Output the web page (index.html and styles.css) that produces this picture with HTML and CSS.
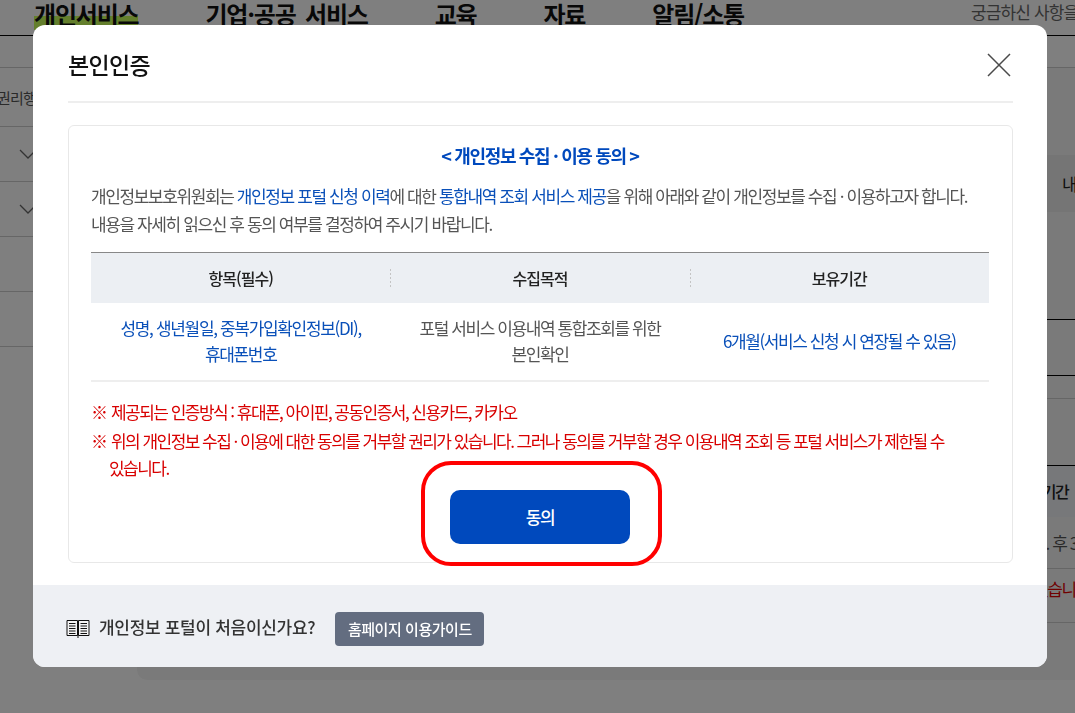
FILE: index.html
```html
<!DOCTYPE html>
<html lang="ko">
<head>
<meta charset="utf-8">
<title>본인인증</title>
<link rel="stylesheet" href="styles.css">
</head>
<body>
<div class="page">
  <header class="gnb">
    <nav class="gnb-menu">
      <a class="gnb-item gnb-active">개인서비스</a>
      <a class="gnb-item">기업·공공 서비스</a>
      <a class="gnb-item">교육</a>
      <a class="gnb-item">자료</a>
      <a class="gnb-item">알림/소통</a>
    </nav>
    <span class="gnb-search">궁금하신 사항을</span>
  </header>
  <div class="under">
    <aside class="side">
      <div class="side-row side-first"><span class="side-label">권리행사</span></div>
      <div class="side-row"><svg class="chev" viewBox="0 0 18 10"><path d="M1 1l8 8 8-8"/></svg></div>
      <div class="side-row"><svg class="chev" viewBox="0 0 18 10"><path d="M1 1l8 8 8-8"/></svg></div>
      <div class="side-row"></div>
      <div class="side-row"></div>
    </aside>
    <main class="main">
      <div class="main-box">내</div>
      <div class="mt-a"></div>
      <div class="mt-b"></div>
      <div class="mt-c"></div>
      <div class="mt-d"></div>
      <div class="mt-head">보유기간</div>
      <div class="mt-row">처리. 후 3일</div>
      <div class="mt-row mt-red">있습니다</div>
    </main>
  </div>
</div>

<div class="dim"></div>

<section class="modal">
  <div class="modal-body">
    <div class="modal-head">
      <h1 class="modal-title">본인인증</h1>
      <svg class="close" viewBox="0 0 24 24"><path d="M1 1l22 22M23 1L1 23"/></svg>
    </div>
    <div class="card">
      <h2 class="card-title">&lt; 개인정보 수집 · 이용 동의 &gt;</h2>
      <p class="lead">개인정보보호위원회는 <span class="blue">개인정보 포털 신청 이력</span>에 대한 <span class="blue">통합내역 조회 서비스 제공</span>을 위해 아래와 같이 개인정보를 수집 · 이용하고자 합니다.<br>내용을 자세히 읽으신 후 동의 여부를 결정하여 주시기 바랍니다.</p>
      <table class="terms">
        <thead>
          <tr><th>항목(필수)</th><th>수집목적</th><th>보유기간</th></tr>
        </thead>
        <tbody>
          <tr>
            <td class="blue td-wide">성명, 생년월일, 중복가입확인정보(DI),<br>휴대폰번호</td>
            <td>포털 서비스 이용내역 통합조회를 위한<br>본인확인</td>
            <td class="blue">6개월(서비스 신청 시 연장될 수 있음)</td>
          </tr>
        </tbody>
      </table>
      <ul class="notes">
        <li>제공되는 인증방식 : 휴대폰, 아이핀, 공동인증서, 신용카드, 카카오</li>
        <li>위의 개인정보 수집 · 이용에 대한 동의를 거부할 권리가 있습니다. 그러나 동의를 거부할 경우 이용내역 조회 등 포털 서비스가 제한될 수 있습니다.</li>
      </ul>
      <div class="agree-wrap">
        <button class="agree" type="button">동의</button>
        <div class="agree-ring"></div>
      </div>
    </div>
  </div>
  <footer class="modal-foot">
    <svg class="book" viewBox="0 0 24 19"><path class="book-fill" d="M1 1.500h10.500v15H1zM12.500 1.500H23v15H12.500z"/><path d="M1 1.500h10.500v15H1zM12.500 1.500H23v15H12.500zM12 1.500V19M3 4.500h6.500M3 7h6.500M3 9.500h6.500M3 12h6.500M3 14.500h6.500M14.500 4.500H21M14.500 7H21M14.500 9.500H21M14.500 12H21M14.500 14.500H21"/></svg>
    <span class="foot-text">개인정보 포털이 처음이신가요?</span>
    <a class="guide">홈페이지 이용가이드</a>
  </footer>
</section>
</body>
</html>
```

FILE: styles.css
```css
* { box-sizing: border-box; }
html, body { margin: 0; height: 100%; overflow: hidden; }
body {
  font-family: "Noto Sans CJK KR", "Noto Sans", sans-serif;
  color: #222;
  background: #fff;
  letter-spacing: -0.087em;
}

/* page behind the dialog */
.page { height: 713px; overflow: hidden; display: flex; flex-direction: column; }
.gnb { height: 36px; flex: none; display: flex; border-bottom: 1px solid #000; padding-left: 34px; overflow: hidden; }
.gnb-menu { display: flex; gap: 67px; flex: none; }
.gnb-item { font-size: 24px; font-weight: 700; line-height: 28px; color: #111; white-space: nowrap; letter-spacing: -0.05em; word-spacing: 4px; }
.gnb-active { background: linear-gradient(transparent 16px, #c8ff5a 16px); height: 30px; }
.gnb-search { margin-left: 227px; font-size: 17px; line-height: 24px; color: #666; white-space: nowrap; flex: none; letter-spacing: -0.05em; }
.under { flex: 1; display: flex; align-items: flex-start; }
.side { width: 137px; flex: none; padding-top: 31px; }
.side-row { height: 55px; border-bottom: 1px solid #ccc; display: flex; align-items: center; padding-left: 19px; }
.side-first { height: 60px; padding-left: 0; border-top: 1px solid #ccc; }
.side-label { font-size: 15px; color: #555; white-space: nowrap; margin-left: -3px; letter-spacing: -0.05em; }
.chev { width: 18px; height: 10px; fill: none; stroke: #666; stroke-width: 1.300; }
.main { flex: 1; min-width: 0; height: 613px; margin-top: 31px; background: #f5f5f5; border-radius: 0 0 0 10px; border-top: 1px solid #ccc; padding-top: 87px; }
.main-box { height: 57px; background: #eaeaea; font-size: 17px; line-height: 57px; padding-left: 925px; white-space: nowrap; }
.mt-a { height: 108px; border-bottom: 1px solid #000; }
.mt-b { height: 56px; border-bottom: 1px solid #000; }
.mt-c { height: 23px; border-bottom: 1px solid #ccc; }
.mt-d { height: 67px; border-bottom: 1px solid #000; }
.mt-head { height: 51px; background: #eef1f5; font-size: 16px; font-weight: 500; line-height: 51px; padding-left: 878px; white-space: nowrap; }
.mt-row { height: 52px; border-bottom: 1px solid #ccc; font-size: 17px; line-height: 52px; padding-left: 880px; white-space: nowrap; color: #555; }
.mt-red { height: 54px; color: #e00000; padding-left: 896px; line-height: 40px; }
.dim { position: fixed; inset: 0; background: rgba(0, 0, 0, 0.5); }

/* dialog */
.modal {
  position: fixed; left: 33px; top: 25px; width: 1014px; height: 642px;
  background: #fff; border-radius: 12px; overflow: hidden;
  display: flex; flex-direction: column;
}
.modal-body { flex: 1; padding: 0 34px 0 35px; display: flex; flex-direction: column; }
.modal-head { height: 78px; border-bottom: 2px solid #eeeeee; display: flex; align-items: center; justify-content: space-between; flex: none; padding-top: 2px; }
.modal-title { margin: 0; font-size: 23px; font-weight: 500; color: #111; line-height: 30px; letter-spacing: -0.03em; }
.close { width: 24px; height: 24px; fill: none; stroke: #4a4a4a; stroke-width: 1.500; margin: 2px 2px 0 0; }
.card { margin-top: 22px; height: 438px; border: 1px solid #e8e8e8; border-radius: 6px; padding: 0 23px 0 22px; display: flex; flex-direction: column; }
.card-title { margin: 17px 0 0; font-size: 18px; line-height: 24px; font-weight: 700; color: #0049bd; text-align: center; letter-spacing: -0.075em; }
.lead { margin: 15px 0 0; font-size: 17px; line-height: 28px; color: #555; }
.blue { color: #0a50b9; }
.terms { margin-top: 14px; width: 100%; border-collapse: collapse; table-layout: fixed; font-size: 17px; line-height: 26px; letter-spacing: -0.083em; }
.terms thead tr { background: #eceff3; border-top: 1px solid #888; }
.terms th { height: 50px; font-size: 16px; font-weight: 500; color: #222; padding: 0; letter-spacing: -0.06em; background-image: repeating-linear-gradient(#c4c4c4 0 2px, transparent 2px 4px); background-size: 1px 18px; background-repeat: no-repeat; background-position: left center; }
.terms th:first-child { background-image: none; }
.terms td { height: 78px; padding: 0; text-align: center; vertical-align: middle; }
.terms td.td-wide { letter-spacing: -0.078em; }
.terms td:not(.blue) { color: #555; }
.terms tbody tr { border-bottom: 2px solid #eeeeee; }
.notes { list-style: none; margin: 16px 0 0; padding: 0; font-size: 17px; line-height: 27px; color: #d80000; letter-spacing: -0.09em; }
.notes li { padding-left: 18px; text-indent: -18px; margin-bottom: 2px; padding-right: 30px; }
.notes li::before { content: "※"; display: inline-block; width: 20px; text-indent: 0; }
.agree-wrap { display: flex; justify-content: center; margin-top: 7px; position: relative; }
.agree { width: 180px; height: 54px; border: 0; border-radius: 10px; background: #0049bd; color: #fff; font: inherit; font-size: 17px; letter-spacing: -0.08em; font-weight: 500; }
.agree-ring { position: absolute; left: 330px; top: -29px; width: 241px; height: 105px; border: 4px solid #ff0000; border-radius: 30px; pointer-events: none; }
.modal-foot { height: 82px; flex: none; background: #eef0f4; display: flex; align-items: center; padding-left: 33px; }
.book { width: 24px; height: 19px; fill: none; stroke: #111; stroke-width: 1; flex: none; margin-top: 4px; }
.book .book-fill { fill: #f4f4f4; stroke: none; }
.foot-text { margin-left: 9px; font-size: 17px; font-weight: 500; color: #333; letter-spacing: -0.018em; }
.guide { margin-left: 20px; margin-top: 5px; width: 149px; height: 34px; border-radius: 4px; background: #636d80; color: #fff; font-size: 15px; font-weight: 500; line-height: 34px; text-align: center; letter-spacing: -0.03em; }
```
